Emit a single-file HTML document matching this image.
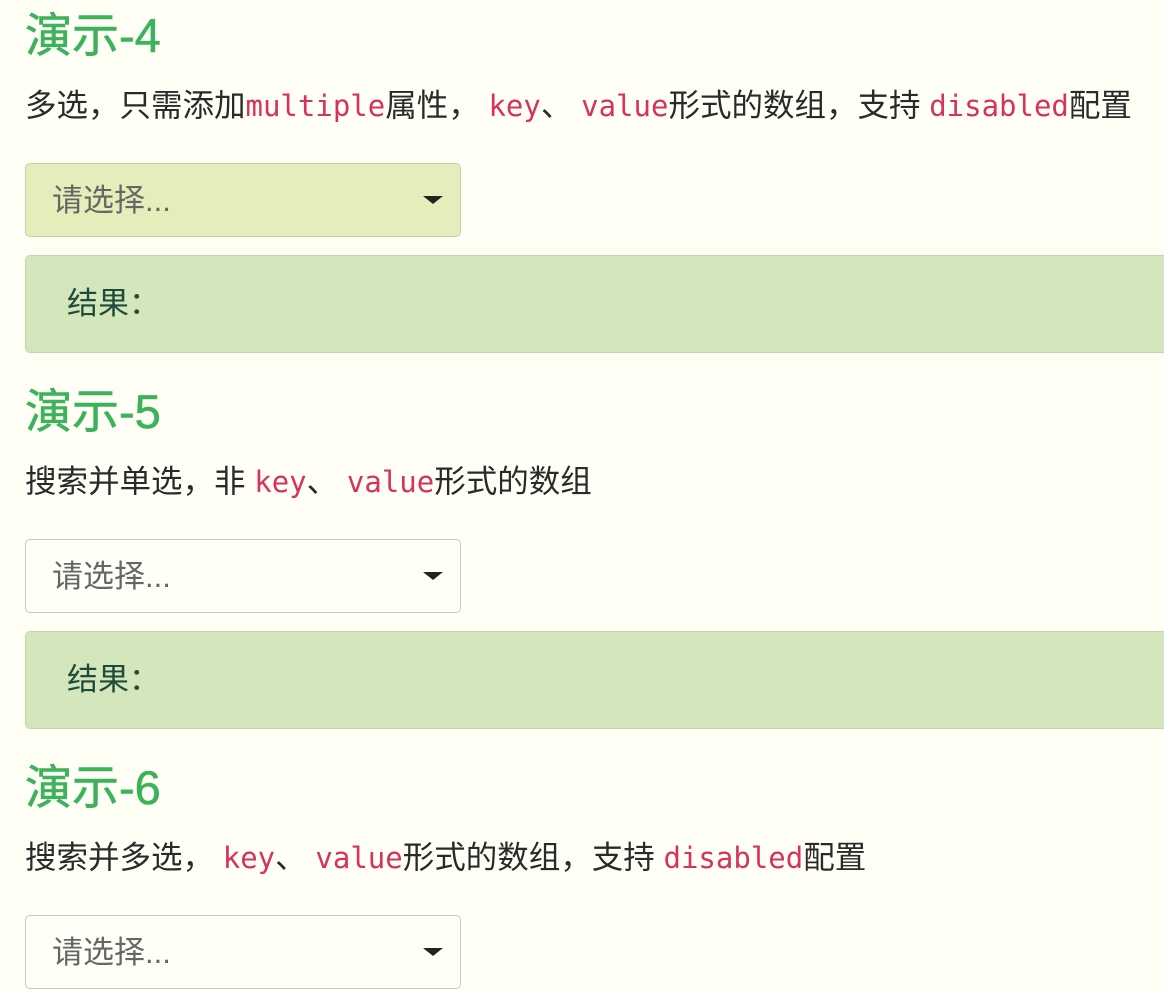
<!DOCTYPE html>
<html><head><meta charset="utf-8"><style>
body{margin:0;background:#fffff6;font-family:"Liberation Sans","Noto Sans CJK SC",sans-serif;width:1164px;height:992px;overflow:hidden;position:relative;color:#222}
.h{position:absolute;left:25px;font-size:47px;color:#3cb35a;line-height:1;font-weight:normal;-webkit-text-stroke:0.6px #3cb35a}
.p{position:absolute;left:25px;font-size:31.5px;line-height:1;white-space:nowrap;color:#2a2a2a}
code{font-family:"DejaVu Sans Mono","Liberation Mono",monospace;color:#d6325a;font-size:29px}
.s{position:absolute;left:25px;width:434px;height:72px;border:1px solid #c9ceb0;border-radius:5px;background:#fffff8}
.s span{position:absolute;left:26px;top:21px;font-size:31px;color:#666;line-height:1}
.s i{position:absolute;left:397px;top:32px;width:0;height:0;border-left:10px solid transparent;border-right:10px solid transparent;border-top:8px solid #222}
.r{position:absolute;left:25px;width:1150px;height:96px;border:1px solid #c0d8a8;border-radius:5px;background:#d3e6bc}
.r span{position:absolute;left:41px;top:32px;font-size:31px;color:#1f4a3a;line-height:1}
</style></head><body>
<div class="h" style="top:12px">演示-4</div>
<div class="p" style="top:90px">多选，只需添加<code>multiple</code>属性， <code>key</code>、 <code>value</code>形式的数组，支持 <code>disabled</code>配置</div>
<div class="s" style="top:163px;background:#e6ecba"><span>请选择...</span><i></i></div>
<div class="r" style="top:255px"><span>结果：</span></div>
<div class="h" style="top:388px">演示-5</div>
<div class="p" style="top:466px">搜索并单选，非 <code>key</code>、 <code>value</code>形式的数组</div>
<div class="s" style="top:539px"><span>请选择...</span><i></i></div>
<div class="r" style="top:631px"><span>结果：</span></div>
<div class="h" style="top:764px">演示-6</div>
<div class="p" style="top:842px">搜索并多选， <code>key</code>、 <code>value</code>形式的数组，支持 <code>disabled</code>配置</div>
<div class="s" style="top:915px"><span>请选择...</span><i></i></div>
</body></html>
